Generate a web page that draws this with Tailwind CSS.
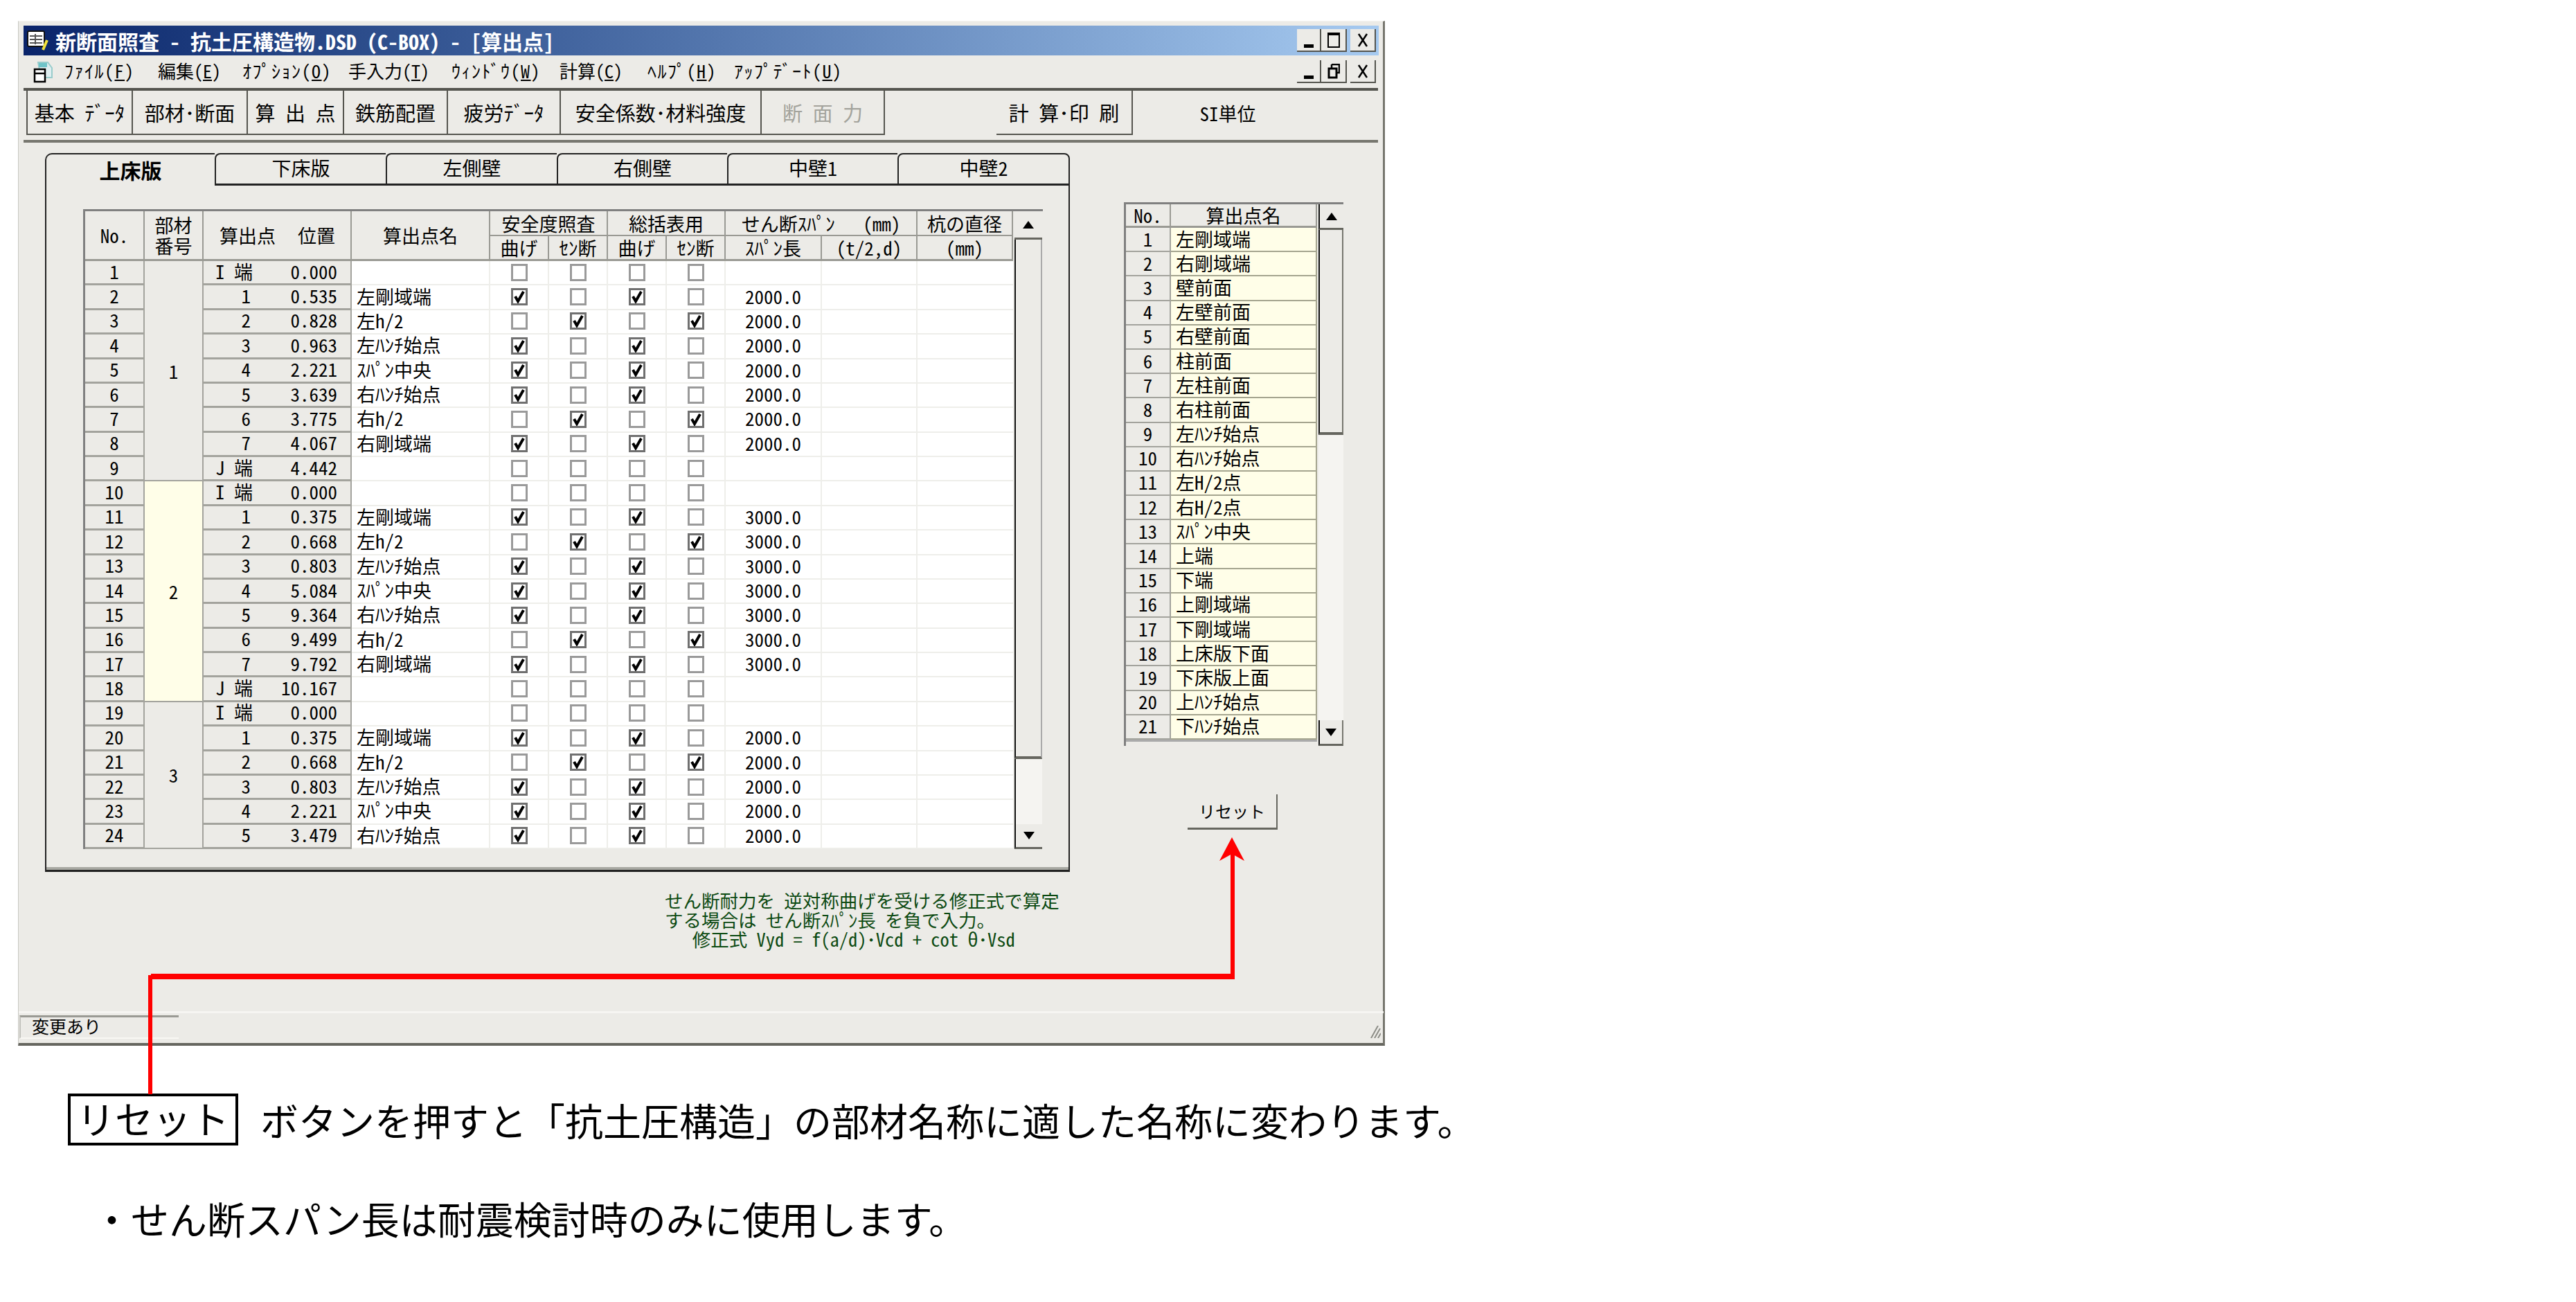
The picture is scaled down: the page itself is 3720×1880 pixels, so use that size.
<!DOCTYPE html>
<html lang="ja">
<head>
  <meta charset="UTF-8">
  <title>新断面照査 - 算出点</title>
  <script src="https://cdn.jsdelivr.net/npm/@tailwindcss/browser@4"></script>
</head>
<body class="bg-white font-['Noto_Sans_CJK_JP','Liberation_Sans',sans-serif] text-black">
<div class="relative w-[3720px] h-[1880px] overflow-hidden pt-[30px]">

  <!-- window -->
  <div class="ml-[26px] w-[1974px] h-[1480px] bg-[#ecebe7] border-r-[3px] border-b-[4px] border-l border-t border-r-[#77776f] border-b-[#66665f] border-l-[#c8c8c2] border-t-[#f4f3f0] flex flex-col pt-[6px] pl-[7px] pr-[6px] font-['Noto_Sans_Mono_CJK_JP','Noto_Sans_CJK_JP',monospace]">

    <!-- title bar -->
    <div class="h-[43px] shrink-0 flex items-center bg-gradient-to-r from-[#0a246a] to-[#a6caf0] text-white">
      <svg class="ml-[4px] w-[34px] h-[32px]" viewBox="0 0 34 32">
        <rect x="2" y="2" width="24" height="22" rx="2" fill="#fff" stroke="#111" stroke-width="2"/>
        <path d="M5 9h18M5 14h18M5 19h18M13 6v15" stroke="#555" stroke-width="2"/>
        <path d="M30 15l-6 14" stroke="#f2e23c" stroke-width="4"/>
      </svg>
      <span class="ml-[8px] text-[30px] font-bold leading-none whitespace-pre">新断面照査 - 抗土圧構造物.DSD (C-BOX) - [算出点]</span>
      <div class="ml-auto mr-[4px] flex">
        <button class="w-[35px] h-[33px] bg-[#ecebe7] border-r-2 border-b-2 border-[#55554f] flex items-end justify-center pb-[4px]"><span class="w-[14px] h-[5px] bg-black"></span></button>
        <button class="w-[37px] h-[33px] bg-[#ecebe7] border-r-2 border-b-2 border-[#55554f] flex items-center justify-center"><span class="w-[18px] h-[22px] border-2 border-t-4 border-black"></span></button>
        <button class="ml-[5px] w-[37px] h-[33px] bg-[#ecebe7] border-r-2 border-b-2 border-[#55554f] flex items-center justify-center">
          <svg class="w-[16px] h-[20px]" viewBox="0 0 16 20"><path d="M2 1l12 18M14 1L2 19" stroke="#000" stroke-width="2.5"/></svg>
        </button>
      </div>
    </div>

    <!-- menu bar -->
    <div class="h-[47px] shrink-0 flex items-center relative">
      <svg class="ml-[13px] w-[32px] h-[32px]" viewBox="0 0 32 32">
        <path d="M8 2h14l6 8v14H12z" fill="#dfeef0" stroke="#9cc" stroke-width="2"/>
        <path d="M9 3h12v6H9z" fill="#6fc4c9"/>
        <rect x="3" y="12" width="15" height="18" fill="#fff" stroke="#000" stroke-width="2.5"/>
        <path d="M4 18h13" stroke="#000" stroke-width="2.5"/>
      </svg>
      <nav class="ml-[14px] pb-[4px] flex text-[26px] leading-none whitespace-nowrap">
        <span class="w-[135px] tracking-[1.5px]">ﾌｧｲﾙ(<u>F</u>)</span>
        <span class="w-[122px]">編集(<u>E</u>)</span>
        <span class="w-[153px] tracking-[1.5px]">ｵﾌﾟｼｮﾝ(<u>O</u>)</span>
        <span class="w-[149px]">手入力(<u>T</u>)</span>
        <span class="w-[156px] tracking-[1.5px]">ｳｨﾝﾄﾞｳ(<u>W</u>)</span>
        <span class="w-[127px]">計算(<u>C</u>)</span>
        <span class="w-[125px] tracking-[1.5px]">ﾍﾙﾌﾟ(<u>H</u>)</span>
        <span class="tracking-[1.5px]">ｱｯﾌﾟﾃﾞｰﾄ(<u>U</u>)</span>
      </nav>
      <div class="ml-auto mr-[4px] flex">
        <button class="w-[35px] h-[33px] border-r-2 border-b-2 border-[#55554f] flex items-end justify-center pb-[4px]"><span class="w-[14px] h-[5px] bg-black"></span></button>
        <button class="w-[37px] h-[33px] border-r-2 border-b-2 border-[#55554f] flex items-center justify-center">
          <svg class="w-[18px] h-[22px]" viewBox="0 0 18 22"><path d="M6 1h11v12h-4M6 1v5" fill="none" stroke="#000" stroke-width="2.5"/><rect x="2" y="7" width="11" height="13" fill="none" stroke="#000" stroke-width="3"/></svg>
        </button>
        <button class="ml-[5px] w-[37px] h-[33px] border-r-2 border-b-2 border-[#55554f] flex items-center justify-center">
          <svg class="w-[16px] h-[20px]" viewBox="0 0 16 20"><path d="M2 1l12 18M14 1L2 19" stroke="#000" stroke-width="2.5"/></svg>
        </button>
      </div>
    </div>

    <!-- toolbar -->
    <div class="h-[79px] shrink-0 border-t-[4px] border-b-[4px] border-t-[#55554f] border-b-[#77776f] mr-[1px] flex text-[29px] leading-none whitespace-pre">
      <div class="h-[64px] flex items-stretch pl-[4px]">
        <button class="w-[154px] border-l-2 border-r-2 border-b-2 border-[#55554f]">基本 ﾃﾞｰﾀ</button>
        <button class="w-[166px] border-r-2 border-b-2 border-[#55554f]">部材･断面</button>
        <button class="w-[139px] border-r-2 border-b-2 border-[#55554f]">算 出 点</button>
        <button class="w-[150px] border-r-2 border-b-2 border-[#55554f]">鉄筋配置</button>
        <button class="w-[163px] border-r-2 border-b-2 border-[#55554f]">疲労ﾃﾞｰﾀ</button>
        <button class="w-[290px] border-r-2 border-b-2 border-[#55554f]">安全係数･材料強度</button>
        <button class="w-[178px] border-r-2 border-b-2 border-[#55554f] text-[#a3a39c]">断 面 力</button>
        <button class="ml-[161px] w-[197px] border-r-2 border-b-2 border-[#55554f]">計 算･印 刷</button>
        <span class="w-[274px] flex items-center justify-center text-[27px]">SI単位</span>
      </div>
    </div>

    <!-- main -->
    <div class="flex-1 flex pt-[15px] pl-[31px] min-h-0">

      <div class="flex flex-col">
        <!-- tab panel -->
        <div class="w-[1480px] h-[1038px] flex flex-col">
          <div class="h-[47px] shrink-0 flex text-[28px] leading-none">
            <div class="w-[245px] pb-[2px] border-l-2 border-t-2 border-[#222] rounded-tl-[10px] bg-[#ecebe7] flex items-center justify-center font-bold text-[30px]">上床版</div>
            <div class="w-[247px] pb-[4px] border-l-2 border-t-2 border-b-[3px] border-[#222] rounded-tl-[8px] flex items-center justify-center">下床版</div>
            <div class="w-[247px] pb-[4px] border-l-2 border-t-2 border-b-[3px] border-[#222] rounded-tl-[8px] flex items-center justify-center">左側壁</div>
            <div class="w-[246px] pb-[4px] border-l-2 border-t-2 border-b-[3px] border-[#222] rounded-tl-[8px] flex items-center justify-center">右側壁</div>
            <div class="w-[246px] pb-[4px] border-l-2 border-t-2 border-b-[3px] border-[#222] rounded-tl-[8px] flex items-center justify-center">中壁1</div>
            <div class="w-[249px] pb-[4px] border-l-2 border-t-2 border-r-2 border-b-[3px] border-[#222] rounded-t-[8px] flex items-center justify-center">中壁2</div>
          </div>
          <div class="flex-1 border-l-2 border-r-2 border-b-[3px] border-l-[#222] border-r-[#222] border-b-[#222] pt-[34px] pl-[53px] shadow-[inset_0_-4px_0_#a8a8a2]">
            <div class="w-[1386px] flex border-t-[3px] border-l-[3px] border-[#808080]">
              <div class="w-[1340px]">
                <div class="h-[72px] grid grid-cols-[86px_85px_214px_200px_85px_85px_85px_85px_139px_138px_138px] grid-rows-2 text-[27px] leading-none">
                  <div class="row-span-2 flex items-center justify-center border-r-2 border-b-[3px] border-[#9a9a94]">No.</div>
                  <div class="row-span-2 flex flex-col items-center justify-center gap-[3px] border-r-2 border-b-[3px] border-[#9a9a94]"><span>部材</span><span>番号</span></div>
                  <div class="row-span-2 flex items-center pl-[23px] gap-[32px] whitespace-nowrap border-r-2 border-b-[3px] border-[#9a9a94]"><span>算出点</span><span>位置</span></div>
                  <div class="row-span-2 flex items-center justify-center border-r-2 border-b-[3px] border-[#9a9a94]">算出点名</div>
                  <div class="col-span-2 flex items-center justify-center whitespace-nowrap border-r-2 border-b-2 border-[#9a9a94]">安全度照査</div>
                  <div class="col-span-2 flex items-center justify-center whitespace-nowrap border-r-2 border-b-2 border-[#9a9a94]">総括表用</div>
                  <div class="col-span-2 flex items-center justify-center whitespace-pre border-r-2 border-b-2 border-[#9a9a94]">せん断ｽﾊﾟﾝ   (mm)</div>
                  <div class="flex items-center justify-center whitespace-nowrap border-r-2 border-b-2 border-[#9a9a94]">杭の直径</div>
                  <div class="flex items-center justify-center border-r-2 border-b-[3px] border-[#9a9a94]">曲げ</div>
                  <div class="flex items-center justify-center border-r-2 border-b-[3px] border-[#9a9a94]">ｾﾝ断</div>
                  <div class="flex items-center justify-center border-r-2 border-b-[3px] border-[#9a9a94]">曲げ</div>
                  <div class="flex items-center justify-center border-r-2 border-b-[3px] border-[#9a9a94]">ｾﾝ断</div>
                  <div class="flex items-center justify-center border-r-2 border-b-[3px] border-[#9a9a94]">ｽﾊﾟﾝ長</div>
                  <div class="flex items-center justify-center border-r-2 border-b-[3px] border-[#9a9a94]">(t/2,d)</div>
                  <div class="flex items-center justify-center border-r-2 border-b-[3px] border-[#9a9a94]">(mm)</div>
                </div>
                <div id="grid-body" class="h-[849px] bg-white grid grid-cols-[86px_85px_214px_200px_85px_85px_85px_85px_139px_138px_138px] grid-rows-[repeat(24,1fr)] text-[27px] leading-none"></div>
              </div>
              <!-- grid scrollbar -->
              <div class="ml-[2px] w-[40px] flex flex-col bg-[#f5f4f1]">
                <button class="h-[41px] shrink-0 bg-[#ecebe7] border-b-[3px] border-[#66665f] flex items-center justify-center"><span class="w-0 h-0 border-x-[8px] border-x-transparent border-b-[11px] border-b-black"></span></button>
                <div class="h-[750px] shrink-0 bg-[#ecebe7] border-l-2 border-l-[#111] border-r-2 border-r-[#aaa] border-b-[4px] border-b-[#66665f]"></div>
                <div class="flex-1 border-l-2 border-l-[#111]"></div>
                <button class="h-[36px] shrink-0 bg-[#ecebe7] border-l-2 border-l-[#111] border-b-[3px] border-[#66665f] flex items-center justify-center"><span class="w-0 h-0 border-x-[8px] border-x-transparent border-t-[11px] border-t-black"></span></button>
              </div>
            </div>
          </div>
        </div>
        <!-- note -->
        <div class="ml-[895px] mt-[27px] text-[26.5px] leading-[28px] text-[#0c4a12] whitespace-pre">せん断耐力を 逆対称曲げを受ける修正式で算定
する場合は せん断ｽﾊﾟﾝ長 を負で入力。
   修正式 Vyd = f(a/d)･Vcd + cot θ･Vsd</div>
      </div>

      <!-- right column -->
      <div class="ml-[78px] pt-[71px] flex flex-col">
        <div class="w-[317px] h-[785px] flex border-t-[3px] border-l-[3px] border-[#808080] bg-[#ecebe7]">
          <div class="w-[276px]">
            <div class="h-[34px] grid grid-cols-[65px_211px] text-[27px] leading-none border-b-[3px] border-[#9a9a94]">
              <div class="flex items-center justify-center border-r-2 border-[#9a9a94]">No.</div>
              <div class="flex items-center justify-center border-r-2 border-[#9a9a94]">算出点名</div>
            </div>
            <div id="list-body" class="h-[742px] grid grid-cols-[65px_211px] grid-rows-[repeat(21,1fr)] text-[27px] leading-none border-b-[3px] border-[#aaa]"></div>
          </div>
          <div class="ml-[2px] w-[36px] h-[782px] flex flex-col bg-[#f5f4f1]">
            <button class="h-[37px] shrink-0 bg-[#ecebe7] border-l-2 border-l-[#111] border-b-[3px] border-b-[#66665f] flex items-center justify-center"><span class="w-0 h-0 border-x-[8px] border-x-transparent border-b-[11px] border-b-black"></span></button>
            <div class="h-[296px] shrink-0 bg-[#ecebe7] border-l-2 border-l-[#111] border-r-2 border-r-[#77776f] border-b-[4px] border-b-[#66665f]"></div>
            <div class="flex-1"></div>
            <button class="h-[37px] shrink-0 bg-[#ecebe7] border-l-2 border-l-[#111] border-r-2 border-r-[#77776f] border-b-[3px] border-b-[#66665f] flex items-center justify-center"><span class="w-0 h-0 border-x-[8px] border-x-transparent border-t-[11px] border-t-black"></span></button>
          </div>
        </div>
        <button class="ml-[92px] mt-[70px] w-[130px] h-[51px] border-r-2 border-b-[3px] border-[#66665f] text-[24px] leading-none">リセット</button>
      </div>
    </div>

    <!-- status bar -->
    <div class="h-[46px] shrink-0 -mx-[7px] flex items-stretch border-t-[3px] border-[#f6f5f2]">
      <div class="w-[230px] ml-[1px] mt-[3px] mb-[6px] pb-[5px] border-t-[3px] border-l-2 border-b-2 border-t-[#9a9a94] border-l-[#c2c2bc] border-b-[#f8f7f4] pl-[16px] flex items-center text-[25px] leading-none">変更あり</div>
      <svg class="ml-auto mr-[4px] mt-[18px] w-[16px] h-[18px]" viewBox="0 0 16 18"><path d="M2 18L12 0M7 18L15 4M12 18l4-7" stroke="#8d8d87" stroke-width="2"/></svg>
    </div>
  </div>

  <!-- caption -->
  <div class="ml-[98px] mt-[69px] flex items-center text-[55px] leading-none whitespace-nowrap">
    <span class="w-[246px] h-[75px] pb-[6px] border-4 border-black flex items-center justify-center">リセット</span>
    <span class="ml-[32px]">ボタンを押すと「抗土圧構造」の部材名称に適した名称に変わります。</span>
  </div>
  <p class="ml-[134px] mt-[77px] text-[55px] leading-none whitespace-nowrap">・せん断スパン長は耐震検討時のみに使用します。</p>

  <!-- red leader arrow over window and caption -->
  <svg class="absolute left-0 top-0 pointer-events-none" width="3720" height="1880" viewBox="0 0 3720 1880">
    <path d="M1779 1209L1797 1243L1779 1233L1761 1243Z" fill="#ff0000"/>
    <rect x="1777" y="1230" width="6" height="180" fill="#ff0000"/>
    <rect x="218" y="1406" width="1565" height="8" fill="#ff0000"/>
    <rect x="214" y="1408" width="6" height="172" fill="#ff0000"/>
  </svg>
</div>

<script>
  const CHECK = '<svg class="w-[18px] h-[19px]" viewBox="0 0 18 19"><path d="M3 9l4 7 8-14" fill="none" stroke="#000" stroke-width="4"/></svg>';
  const box = (on) => `<div class="pb-[1px] flex items-center justify-center border-r-2 border-b-2 border-[#eeeeea]"><span class="w-[24px] h-[25px] border-[3px] ${on ? 'border-[#707070]' : 'border-[#9a9a9a]'} bg-white flex items-center justify-center">${on ? CHECK : ''}</span></div>`;

  // [算出点, 位置, 算出点名, m=曲げ checked / s=せん断 checked]
  const groups = [
    { no: 1, span: '2000.0', cls: 'row-span-9 bg-[#ecebe7]', rows: [
      ['I 端','0.000','',''],['1','0.535','左剛域端','m'],['2','0.828','左h/2','s'],['3','0.963','左ﾊﾝﾁ始点','m'],
      ['4','2.221','ｽﾊﾟﾝ中央','m'],['5','3.639','右ﾊﾝﾁ始点','m'],['6','3.775','右h/2','s'],['7','4.067','右剛域端','m'],['J 端','4.442','','']] },
    { no: 2, span: '3000.0', cls: 'row-span-9 bg-[#fffee8]', rows: [
      ['I 端','0.000','',''],['1','0.375','左剛域端','m'],['2','0.668','左h/2','s'],['3','0.803','左ﾊﾝﾁ始点','m'],
      ['4','5.084','ｽﾊﾟﾝ中央','m'],['5','9.364','右ﾊﾝﾁ始点','m'],['6','9.499','右h/2','s'],['7','9.792','右剛域端','m'],['J 端','10.167','','']] },
    { no: 3, span: '2000.0', cls: 'row-span-6 bg-[#ecebe7]', rows: [
      ['I 端','0.000','',''],['1','0.375','左剛域端','m'],['2','0.668','左h/2','s'],['3','0.803','左ﾊﾝﾁ始点','m'],
      ['4','2.221','ｽﾊﾟﾝ中央','m'],['5','3.479','右ﾊﾝﾁ始点','m']] },
  ];

  let html = '', n = 0;
  for (const g of groups) {
    g.rows.forEach((r, i) => {
      n++;
      const isEnd = r[0].includes('端');
      html += `<div class="pb-[4px] bg-[#ecebe7] flex items-center justify-center border-r-2 border-b-[3px] border-[#a3a39d]">${n}</div>`;
      if (i === 0) html += `<div class="${g.cls} flex items-center justify-center border-r-2 border-b-2 border-[#a3a39d]">${g.no}</div>`;
      html += `<div class="pb-[4px] bg-[#ecebe7] flex items-center border-r-2 border-b-[3px] border-[#a3a39d]">`
        + (isEnd ? `<span class="w-[68px] pl-[17px] whitespace-pre">${r[0]}</span>` : `<span class="w-[68px] text-right">${r[0]}</span>`)
        + `<span class="ml-auto pr-[19px]">${r[1]}</span></div>`;
      html += `<div class="pb-[4px] flex items-center pl-[7px] whitespace-nowrap border-r-2 border-b-2 border-[#eeeeea]">${r[2]}</div>`;
      const m = r[3] === 'm', s = r[3] === 's';
      html += box(m) + box(s) + box(m) + box(s);
      html += `<div class="pb-[4px] flex items-center justify-center border-r-2 border-b-2 border-[#eeeeea]">${r[3] ? g.span : ''}</div>`;
      html += '<div class="border-r-2 border-b-2 border-[#eeeeea]"></div><div class="border-b-2 border-[#eeeeea]"></div>';
    });
  }
  document.getElementById('grid-body').innerHTML = html;

  const names = ['左剛域端','右剛域端','壁前面','左壁前面','右壁前面','柱前面','左柱前面','右柱前面','左ﾊﾝﾁ始点','右ﾊﾝﾁ始点','左H/2点','右H/2点','ｽﾊﾟﾝ中央','上端','下端','上剛域端','下剛域端','上床版下面','下床版上面','上ﾊﾝﾁ始点','下ﾊﾝﾁ始点'];
  document.getElementById('list-body').innerHTML = names.map((name, i) =>
    `<div class="pb-[3px] flex items-center justify-center border-r-2 border-b-2 border-[#a3a39d]">${i + 1}</div>`
    + `<div class="pb-[3px] bg-[#fffee8] flex items-center pl-[7px] whitespace-nowrap border-r-2 border-b-2 border-[#a5a58f]">${name}</div>`
  ).join('');
</script>
</body>
</html>
